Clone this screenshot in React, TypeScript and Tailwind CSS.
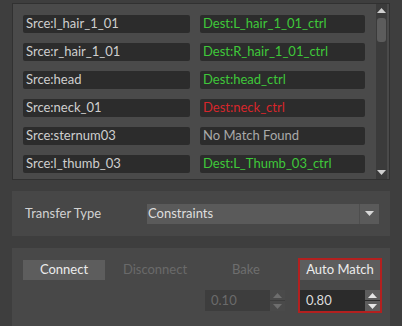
import React from 'react';

const rows = [
  { src: 'Srce:l_hair_1_01', dest: 'Dest:L_hair_1_01_ctrl', tone: 'text-[#3fc83a]' },
  { src: 'Srce:r_hair_1_01', dest: 'Dest:R_hair_1_01_ctrl', tone: 'text-[#3fc83a]' },
  { src: 'Srce:head', dest: 'Dest:head_ctrl', tone: 'text-[#3fc83a]' },
  { src: 'Srce:neck_01', dest: 'Dest:neck_ctrl', tone: 'text-[#d8262b]' },
  { src: 'Srce:sternum03', dest: 'No Match Found', tone: 'text-[#a9a9a9]' },
  { src: 'Srce:l_thumb_03', dest: 'Dest:L_Thumb_03_ctrl', tone: 'text-[#3fc83a]' },
];

const Arrow = ({ up, color }: { up?: boolean; color: string }) => (
  <svg width="9" height="5" viewBox="0 0 9 5">
    <path d={up ? 'M0 5 L4.5 0 L9 5 Z' : 'M0 0 L4.5 5 L9 0 Z'} fill={color} />
  </svg>
);

const SpinBox = ({ value, disabled }: { value: string; disabled?: boolean }) => (
  <div className={`flex h-[21px] w-[80px] ${disabled ? 'bg-[#3d3d3d]' : 'bg-[#2b2b2b]'}`}>
    <div className={`flex flex-1 items-center pl-[6px] ${disabled ? 'text-[#6b6b6b]' : 'text-[#dcdcdc]'}`}>
      {value}
    </div>
    <div className="flex w-[15px] flex-col gap-px">
      <div className={`flex flex-1 items-center justify-center ${disabled ? 'bg-[#4a4a4a]' : 'bg-[#5d5d5d]'}`}>
        <Arrow up color={disabled ? '#6e6e6e' : '#e6e6e6'} />
      </div>
      <div className={`flex flex-1 items-center justify-center ${disabled ? 'bg-[#4a4a4a]' : 'bg-[#5d5d5d]'}`}>
        <Arrow color={disabled ? '#6e6e6e' : '#e6e6e6'} />
      </div>
    </div>
  </div>
);

export default function App() {
  return (
    <div
      className="flex h-[326px] w-[402px] bg-[#3e3e3e] text-[13px]"
      style={{ fontFamily: 'Lato, "Liberation Sans", sans-serif' }}
    >
      <div className="w-3 shrink-0" />
      <div className="flex w-[378px] flex-col">
        {/* mapping list */}
        <div className="mt-[3px] flex h-[177px] border border-[#313131] bg-[#4a4a4a]">
          <div className="flex flex-1 flex-col gap-[10px] pl-[10px] pt-[11px]">
            {rows.map((r) => (
              <div key={r.src} className="flex gap-[10px]">
                <div className="flex h-[18px] w-[167px] items-center rounded-[2px] bg-[#2c2c2c] pl-[3px] text-[#cfcfcf]">
                  {r.src}
                </div>
                <div className={`flex h-[18px] w-[165px] items-center rounded-[2px] bg-[#2c2c2c] pl-[3px] ${r.tone}`}>
                  {r.dest}
                </div>
              </div>
            ))}
          </div>
          <div className="mr-[2px] flex w-[11px] flex-col items-center bg-[#3b3b3b] py-[4px]">
            <Arrow up color="#cfcfcf" />
            <div className="mt-[5px] h-[24px] w-[9px] rounded-[3px] bg-[#5c5c5c]" />
            <div className="flex-1" />
            <Arrow color="#cfcfcf" />
          </div>
        </div>

        {/* transfer type */}
        <div className="mt-[11px] flex h-[45px] items-center bg-[#474747]">
          <div className="w-[135px] pl-[13px] text-[#d2d2d2]">Transfer Type</div>
          <div className="flex h-[20px] w-[232px] bg-[#5a5a5a]">
            <div className="flex flex-1 items-center pl-[1px] text-[#dedede]">Constraints</div>
            <div className="flex w-[20px] items-center justify-center border-l border-[#4e4e4e]">
              <Arrow color="#d8d8d8" />
            </div>
          </div>
        </div>

        {/* actions */}
        <div className="mt-[12px] flex-1 bg-[#484848] pl-[11px] pt-[12px]">
          <div className="flex gap-[9px]">
            <div className="flex w-[82px] flex-col gap-[10px]">
              <div className="flex h-[20px] items-center justify-center bg-[#5d5d5d] text-[#ececec]">Connect</div>
            </div>
            <div className="flex w-[82px] flex-col gap-[10px]">
              <div className="flex h-[20px] items-center justify-center text-[#6a6a6a]">Disconnect</div>
            </div>
            <div className="flex w-[82px] flex-col gap-[10px]">
              <div className="flex h-[20px] items-center justify-center text-[#6e6e6e]">Bake</div>
              <SpinBox value="0.10" disabled />
            </div>
            <div className="-mt-[2px] ml-[2px] flex w-[84px] flex-col gap-[10px] border-2 border-[#b3201f]">
              <div className="flex h-[20px] items-center justify-center bg-[#5d5d5d] text-[#ececec]">Auto Match</div>
              <SpinBox value="0.80" />
            </div>
          </div>
        </div>
      </div>
    </div>
  );
}
